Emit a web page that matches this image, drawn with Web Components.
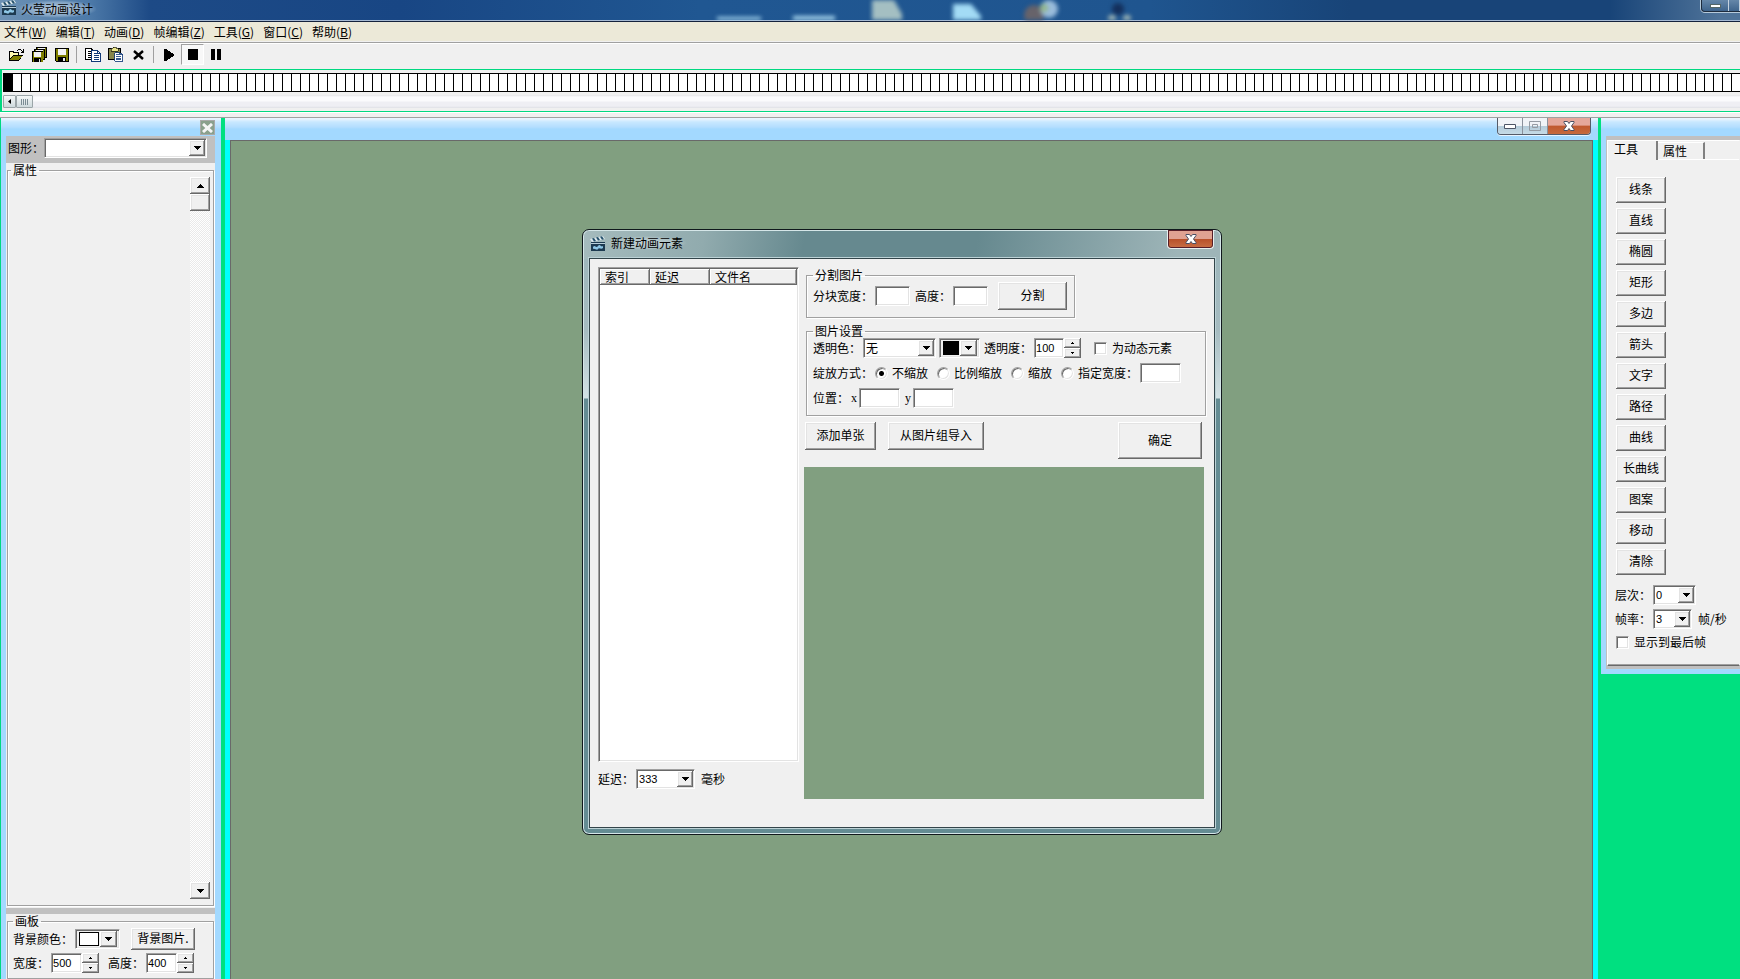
<!DOCTYPE html>
<html lang="zh-CN">
<head>
<meta charset="utf-8">
<title>火莹动画设计</title>
<style>
html,body{margin:0;height:100%}
body{font:12px/14px "Noto Sans CJK SC","Liberation Sans",sans-serif;color:#000;overflow:hidden;background:#f0f0f0}
</style>
</head>
<body>
<fx-app></fx-app>
<script>
const BASE = `
*{box-sizing:border-box}
:host{display:block;box-sizing:border-box}
button,input,select{font:inherit;color:#000;margin:0;padding:0;border:0;border-radius:0;outline:0;background:none;appearance:none}
label,span{white-space:nowrap}
.raised{background:#f0f0f0;box-shadow:inset -1px -1px #696969,inset 1px 1px #fff,inset -2px -2px #a0a0a0,inset 2px 2px #e3e3e3}
.sunken{background:#fff;border:1px solid;border-color:#a0a0a0 #fff #fff #a0a0a0;box-shadow:inset 1px 1px #696969,inset -1px -1px #e3e3e3}
svg{display:block}
`;
const ARROW = '<svg width="7" height="4" shape-rendering="crispEdges"><path d="M0 0h7v1h-1v1h-1v1h-1v1h-1v-1h-1v-1h-1v-1h-1z"/></svg>';
const CLAP = `<svg width="16" height="16" viewBox="0 0 16 16"><path d="M1 6h14v9H1z" fill="#1d3a50"/><path d="M0 3 13 0l2 3L2 6z" fill="#dde8ec"/><path d="m2 2.500 2 3 2-.5-2-3zM6 1.500l2 3 2-.5-2-3zM10 .8l2 3 2-.5-2-3z" fill="#24506b"/><path d="M1 7h14v1H1z" fill="#b9cfda"/><path d="M3 11c2-3 3 2 5-1s3 2 5 0v2c-2 2-4-1-5 1s-3-1-5 0z" fill="#8ec7e6"/></svg>`;
const GLYPH_X = '<svg width="12" height="10" viewBox="0 0 12 10"><path d="M1 .5h3.500L6 2.500 7.500.5H11v1L8.500 5 11 8.500v1H7.500L6 7.500l-1.500 2H1v-1L3.500 5 1 1.500z" fill="#fff" stroke="#4a4f63"/></svg>';

function define(name, css, html){
  customElements.define(name, class extends HTMLElement{
    constructor(){
      super();
      this.attachShadow({mode:'open'});
    }
    connectedCallback(){
      const attr = (key, fallback = '') => this.getAttribute(key) ?? fallback;
      this.shadowRoot.innerHTML = '<style>' + BASE + css + '</style>' + (typeof html === 'function' ? html(attr) : html);
    }
  });
}

/* ---- basic controls ---- */
define('fx-button', `
:host{display:inline-block;width:50px;height:26px;flex:none}
button{width:100%;height:100%;padding-bottom:2px;white-space:nowrap}`,
'<button type="button" class="raised"><slot></slot></button>');

define('fx-combo', `
:host{display:flex;align-items:center;gap:2px;--w:60px}
.box{display:grid;width:var(--w);height:20px;padding:1px}
select{grid-area:1/1;width:100%;height:16px;padding-left:1px;font:var(--combo-font,11px/14px "Liberation Sans",sans-serif)}
.arrow{grid-area:1/1;justify-self:end;width:16px;height:16px;display:grid;place-items:center;pointer-events:none}
.suffix{margin-left:4px}`,
a => `<label for="c">${a('label')}</label><div class="box sunken"><select id="c" aria-label="${a('label')}"><option>${a('value')}</option></select><div class="arrow raised">${ARROW}</div></div>${a('suffix') ? `<span class="suffix">${a('suffix')}</span>` : ''}`);

define('fx-color', `
:host{display:flex;align-items:center;gap:2px}
button{display:flex;align-items:center;height:20px;padding:2px;background:#f0f0f0}
.chip{width:20px;height:14px;border:1px solid #000;margin:0 1px}
.arrow{width:17px;height:16px;display:grid;place-items:center}`,
a => `<label for="c">${a('label')}</label><button id="c" type="button" class="sunken" style="background:#f0f0f0" aria-label="${a('name')}"><div class="chip" style="background:${a('value')};width:${a('chip','20')}px"></div><div class="arrow raised">${ARROW}</div></button>`);

define('fx-field', `
:host{display:flex;align-items:center;gap:2px;--w:35px}
input{width:var(--w);height:20px;padding:0 3px}
.latin{font-family:"Liberation Serif",serif}`,
a => `<label for="t" ${a('latin') ? 'class="latin"' : ''}>${a('label')}</label><input id="t" type="text" class="sunken" aria-label="${a('label')}">`);

define('fx-spin', `
:host{display:flex;align-items:center;gap:2px;--w:31px}
input{width:var(--w);height:20px;padding:0 0 0 1px;font:11px/14px "Liberation Sans",sans-serif}
.wrap{display:flex}
.ud{display:grid;grid-template-rows:10px 10px;width:17px}
.ud button{display:grid;place-items:center}
.ud svg{shape-rendering:crispEdges}`,
a => `<label for="n">${a('label')}</label><div class="wrap"><input id="n" type="text" inputmode="numeric" class="sunken" value="${a('value')}"><div class="ud"><button type="button" class="raised" aria-label="增加"><svg width="3" height="2"><path d="M1 0h1v1h1v1H0V1h1z"/></svg></button><button type="button" class="raised" aria-label="减少"><svg width="3" height="2"><path d="M0 0h3v1H2v1H1V1H0z"/></svg></button></div></div>`);

define('fx-check', `
:host{display:flex;align-items:center;gap:5px}
input{width:13px;height:13px;flex:none}`,
a => `<input id="k" type="checkbox" class="sunken"><label for="k">${a('label')}</label>`);

define('fx-radios', `
:host{display:flex;align-items:center}
.opt{display:flex;align-items:center;gap:4px;margin-right:9px}
.opt:last-of-type{margin-right:0}
.title{margin-right:2px}
input{width:13px;height:13px;border-radius:50%;background:#fff;border:1px solid;border-color:#a0a0a0 #fff #fff #a0a0a0;box-shadow:inset 1px 1px #696969,inset -1px -1px #e3e3e3}
input:checked{background:radial-gradient(circle,#000 2px,#fff 3px)}`,
a => `<span class="title">${a('label')}</span>` + a('options').split(',').map((o,i) =>
`<div class="opt"><input type="radio" name="m" id="r${i}" ${i ? '' : 'checked'}><label for="r${i}">${o}</label></div>`).join(''));

define('fx-group', `
fieldset{margin:0;min-width:0;height:100%;border:1px solid #a0a0a0;box-shadow:1px 1px #fff,inset 1px 1px #fff;padding:var(--pad,0 6px 7px)}
legend{padding:0 2px}`,
a => `<fieldset><legend>${a('label')}</legend><slot></slot></fieldset>`);

/* ---- main window chrome ---- */
define('fx-titlebar', `
:host{height:22px;overflow:hidden;border-bottom:1px solid #14223c;background:linear-gradient(90deg,#6d92b5,#4c79a8 90px,#1d4a86 150px,#184684 400px,#205792 700px,#1f558f 1150px,#184478 1350px,#184478 1610px,#4f7399 1720px)}
.in{display:flex;align-items:flex-start;height:21px;border-bottom:1px solid #a5b9d3;padding-left:1px}
h1{font:inherit;line-height:18px;margin:0 auto 0 0;padding:0 4px;background:radial-gradient(closest-side,#bdd0e3,#a0bad499 75%,transparent)}
svg{flex:none}
.blobs{filter:blur(2px)}
.cap{display:flex;margin-left:382px;width:39px;height:12px;border:1px solid #1d2b3d;border-width:0 0 1px 1px;border-radius:0 0 0 4px;box-shadow:0 1px #b6cadb,-1px 0 #b6cadb;background:linear-gradient(#6587a9,#3f648c)}
.cap button{width:27px;height:11px;border-right:1px solid #c5d3e0;display:grid;place-items:center}
.cap i{width:11px;height:4px;background:#fff;border:1px solid #566}
.cap button+button{width:11px}`,
`<div class="in">${CLAP}<h1>火莹动画设计</h1>
<svg class="blobs" width="620" height="20" viewBox="700 0 620 20"><path d="M718 17h44v6h-44zM794 16h42v6h-42z" fill="#a9d8ef"/><path d="M873 0h22l8 14v8h-30z" fill="#a4bfc2"/><path d="M954 4h18l10 12v6h-28z" fill="#a3dbf5"/><circle cx="1035" cy="15" r="10" fill="#67636a"/><circle cx="1050" cy="9" r="9" fill="#9abcdb"/><circle cx="1045" cy="8" r="4" fill="#94b88e"/><circle cx="1119" cy="9" r="6" fill="#14305c"/><circle cx="1113" cy="19" r="4" fill="#a9bcb6"/><circle cx="1128" cy="19" r="4" fill="#a9bcb6"/></svg>
<div class="cap"><button type="button" aria-label="最小化"><i></i></button><button type="button" aria-label="最大化"></button></div></div>`);

define('fx-menubar', `
:host{height:22px;background:linear-gradient(#ece9d8 19px,#f0f0f0 19px 20px,#a0a0a0 20px 21px,#fff 21px)}
nav{display:flex;gap:9px;padding:3px 4px}
a{color:#000;text-decoration:none;white-space:nowrap}`,
'<nav>' + ['文件W','编辑T','动画D','帧编辑Z','工具G','窗口C','帮助B'].map(m => `<a href="#">${m.slice(0,-1)}(<u>${m.slice(-1)}</u>)</a>`).join('') + '</nav>');

const FLOPPY = '<path d="M0 0h14v14H1l-1-1z"/><path d="M1 1h2v6h8V1h2v12h-2V9H3v4H1z" fill="#808000"/><path d="M3 1h8v6H3z" fill="#f4f4f4"/><path d="M8 10h2v3H8z" fill="#e8e8e8"/>';
const PAGE = '<path d="M0 0h6l3 3v8H0z" fill="#fff" stroke="currentColor"/><path d="M6 0v3h3" fill="none" stroke="currentColor"/><path d="M2 3h3M2 5h5M2 7h5M2 9h5" stroke="currentColor" stroke-width="1"/>';
define('fx-toolbar', `
:host{height:25px;background:#f0f0f0}
div{display:flex;padding-left:4px}
button{width:23px;height:21px;display:grid;place-items:center}
.on{background:#f8f8f8;border:1px solid;border-color:#a0a0a0 #fff #fff #a0a0a0}
hr{width:1px;height:17px;border:0;background:#a0a0a0;margin:2px 4px 2px 3px}
svg{shape-rendering:crispEdges}`,
`<div>
<button type="button" aria-label="打开"><svg width="16" height="14"><path d="M1 3h4l1 1h5v3h4l-4 6H1z" fill="#000"/><path d="M2 4h2l1 1h5v2H5l-3 4z" fill="#fffbb0"/><path d="M5 8h9l-3 4H2z" fill="#808000"/><path d="M9 2h1V1h3v1h1v1h1V1h1v4h-3V4h1V3h-1V2h-3v1H9z"/></svg></button>
<button type="button" aria-label="全部保存"><svg width="16" height="16"><g transform="translate(5 0) scale(.78)">${FLOPPY}</g><g transform="translate(3 2) scale(.78)">${FLOPPY}</g><g transform="translate(1 4) scale(.82)">${FLOPPY}</g></svg></button>
<button type="button" aria-label="保存"><svg width="14" height="14">${FLOPPY}</svg></button>
<hr>
<button type="button" aria-label="复制"><svg width="16" height="14"><g transform="translate(.5 .5)" color="#000">${PAGE}</g><g transform="translate(6.500 2.500)" color="#123a78">${PAGE}</g></svg></button>
<button type="button" aria-label="粘贴"><svg width="16" height="15"><path d="M0 1h13v12H0z"/><path d="M1 2h11v10H1z" fill="#85854a"/><path d="M3 1h2V0h3v1h2v3H3z" fill="#e9e58a" stroke="#000" stroke-width=".6"/><g transform="translate(6.500 5.500) scale(.9 .8)" color="#123a78">${PAGE}</g></svg></button>
<button type="button" aria-label="删除"><svg width="11" height="10" style="shape-rendering:auto"><path d="m1 1 9 8M10 1 1 9" stroke="#000" stroke-width="2.400"/></svg></button>
<hr>
<button type="button" aria-label="播放"><svg width="11" height="12"><path d="M0 0h2l9 6-9 6H0z"/></svg></button>
<button type="button" class="on" aria-label="停止"><svg width="10" height="11"><path d="M0 0h10v11H0z"/></svg></button>
<button type="button" aria-label="暂停"><svg width="10" height="11"><path d="M0 0h4v11H0zM6 0h4v11H6z"/></svg></button>
</div>`);

define('fx-timeline', `
:host{height:49px;border-bottom:1px solid #a0a0a0;background:#f0f0f0}
.frame{height:43px;border:1px solid #00d880;border-width:1px 0 1px 2px;padding:3px 0 3px 1px;box-shadow:0 1px #fff}
.strip{height:19px;border:1px solid #000;border-width:1px 0;background:linear-gradient(#000,#000) 0 0/10px 100% no-repeat,repeating-linear-gradient(90deg,#000 0 1px,#fff 1px 9px)}
.scroll{display:flex;margin-top:3px;height:13px;background:linear-gradient(#e5e5e8,#fbfbfd 2px 6px,#efeff4 7px 11px,#dfe0e6)}
button{height:13px;border:1px solid #9ba5a8;border-radius:1px;background:linear-gradient(#f5f8f8,#ced9dc);display:grid;place-items:center}
.l{width:13px}.t{width:17px}`,
`<div class="frame"><div class="strip"></div><div class="scroll"><button type="button" class="l" aria-label="向左"><svg width="3" height="5"><path d="M3 0v5L0 2.500z"/></svg></button><button type="button" class="t" aria-label="滚动块"><svg width="8" height="6" shape-rendering="crispEdges"><path d="M0 0h1v6H0zM2 0h1v6H2zM4 0h1v6H4zM6 0h1v6H6z" fill="#7b8c94"/></svg></button></div></div>`);

/* ---- docked panels ---- */
define('fx-left', `
:host{display:flex;flex-direction:column;width:221px;flex:none;padding:0 6px 0 5px;background:linear-gradient(#e8f4ff 1px,#c8e8ff 4px,#b4deff 9px,#a3d9ff 11px);border-left:1px solid #00d880}
header{height:18px;display:flex;justify-content:flex-end;padding-top:2px}
header button{width:15px;height:15px;background:#8aa08c;border:1px solid #a9a9a9;display:grid;place-items:center}
.pick{height:27px;background:#c0c0c0;padding:2px 0 0 2px}
.pick fx-combo{--w:163px;gap:0}
.props{flex:1;min-height:0;background:#f0f0f0;padding:0 1px 2px 1px;--pad:0 3px 6px}
.props fx-group{height:100%}
.bar{display:flex;flex-direction:column;margin-left:auto;width:20px;height:100%;background:repeating-conic-gradient(#fff 0 25%,#eaeaea 0 50%) 0 0/2px 2px}
.bar button{height:17px;display:grid;place-items:center}
.bar button:last-child{margin-top:auto}
.bar svg{shape-rendering:crispEdges}
.gap{height:6px;background:#c0c0c0}
.board{background:#f0f0f0;padding:0 1px 0 1px;--pad:0 5px 5px}
.row{display:flex;align-items:center;height:21px}
.row+.row{margin-top:3px}
.row fx-button{width:64px;height:22px;margin-left:11px}
.row fx-spin+fx-spin{margin-left:9px}`,
`<header><button type="button" aria-label="关闭"><svg width="11" height="10"><path d="m1 1 9 8M10 1 1 9" stroke="#f5f5f5" stroke-width="3"/></svg></button></header>
<div class="pick"><fx-combo label="图形：" value=""></fx-combo></div>
<div class="props"><fx-group label="属性"><div class="bar"><button type="button" class="raised" aria-label="向上"><svg width="7" height="4"><path d="M3 0h1v1h1v1h1v1h1v1H0V3h1V2h1V1h1z"/></svg></button><button type="button" class="raised" aria-label="滚动块"></button><button type="button" class="raised" aria-label="向下">${ARROW}</button></div></fx-group></div>
<div class="gap"></div>
<div class="board"><fx-group label="画板"><div class="row"><fx-color label="背景颜色：" name="背景颜色" value="#fff"></fx-color><fx-button>背景图片.</fx-button></div><div class="row"><fx-spin label="宽度：" value="500"></fx-spin><fx-spin label="高度：" value="400"></fx-spin></div></fx-group></div>`);

define('fx-stage', `
:host{flex:1;min-width:0;display:flex;flex-direction:column;background:#0ff}
header{height:22px;flex:none;display:flex;justify-content:flex-end;padding-right:7px;background:linear-gradient(#e8f4ff 1px,#c8e8ff 4px,#b4deff 9px,#a3d9ff 11px)}
header div{display:flex;height:17px;border:1px solid #555b68;border-top:0;border-radius:0 0 4px 4px;overflow:hidden;box-shadow:0 1px #e8f4ff}
header button{width:25px;height:16px;display:grid;place-items:center;background:linear-gradient(#f0f3f7 50%,#b4cbd9 50%,#c6dbe6);border-right:1px solid #8a919c}
header button:last-child{width:42px;border:0;background:linear-gradient(#e5a79b 45%,#c0582f 50%,#c66a3d)}
.art{flex:1;margin:0 5px;background:#819f80;border:1px solid #696969;border-bottom:0}`,
`<header><div><button type="button" aria-label="最小化"><svg width="12" height="5"><path d="M.5.5h11v4H.5z" fill="#fff" stroke="#4c5566"/></svg></button><button type="button" aria-label="还原"><svg width="12" height="10"><path d="M.5.5h11v9H.5zM3.500 3.500h5v3h-5z" fill="none" stroke="#959ba3"/></svg></button><button type="button" aria-label="关闭">${GLYPH_X}</button></div></header><div class="art"></div>`);

define('fx-tools', `
:host{width:139px;flex:none;align-self:flex-start;overflow:hidden;padding:18px 0 5px 5px;background:linear-gradient(#e8f4ff 1px,#c8e8ff 4px,#b4deff 9px,#a3d9ff 11px)}
.edge{background:#c0c0c0;padding:4px 0 3px 1px}
.page{background:#f0f0f0;border:1px solid;border-color:#fff #f0f0f0 #696969 #fff;box-shadow:inset 0 -1px #a0a0a0;padding-bottom:14px}
.tabs{display:flex;height:20px}
.tabs button{height:19px;text-align:left}
.tabs .a{width:50px;padding:0 0 4px 6px;border-right:2px solid #808080}
.tabs .b{width:47px;padding-left:5px;border-top:1px solid #fff;border-right:2px solid #808080;margin-top:1px;height:17px}
.tabs .rest{flex:1;border-bottom:1px solid #fff;display:flex;margin-bottom:1px}
.list{display:grid;gap:5px;justify-content:start;padding:16px 0 0 8px}
.opts{display:grid;gap:4px;padding:10px 0 0 7px}
.opts fx-check{height:18px;padding-left:1px}
.layer{--w:43px}.rate{--w:39px}`,
`<div class="edge"><div class="page"><div class="tabs"><button type="button" class="a">工具</button><div class="rest"><button type="button" class="b">属性</button></div></div>
<div class="list">${'线条,直线,椭圆,矩形,多边,箭头,文字,路径,曲线,长曲线,图案,移动,清除'.split(',').map(t => `<fx-button>${t}</fx-button>`).join('')}</div>
<div class="opts"><fx-combo class="layer" label="层次：" value="0"></fx-combo><fx-combo class="rate" label="帧率：" value="3" suffix="帧/秒"></fx-combo><fx-check label="显示到最后帧"></fx-check></div></div></div>`);

/* ---- floating dialog ---- */
define('fx-dialog', `
:host{border:1px solid #10181c;border-radius:7px;box-shadow:inset 0 0 0 1px #d5e6e8;padding:0 6px 6px;
background:linear-gradient(100deg,#a5bbbd,#91abae 120px,#66898f 220px,#66898f 390px,#9eb5b8 590px) 0 0/100% 29px no-repeat,linear-gradient(#9bb5ba,#a5bbc0 100px,#d2e1e4 168px,#648c93 169px)}
header{height:28px;display:flex;align-items:flex-start;padding:6px 0 0 1px}
h2{font:inherit;margin:0 auto 0 1px;padding:0 4px;background:radial-gradient(closest-side,#c6d5d8,#b7c9cc99 75%,transparent)}
header button{margin:-6px 1px 0 0;width:47px;height:19px;border:1px solid #e8f0f0;border-top:0;border-radius:0 0 4px 4px;box-shadow:inset 0 0 0 1px #561e28;background:linear-gradient(#e0a292 48%,#b8502a 50%,#c86f45);display:grid;place-items:center}
.body{background:#f0f0f0;border:1px solid #33454a;box-shadow:0 0 0 1px #bcd2d6;padding:8px 7px 28px 8px;display:flex;gap:5px}`,
a => `<header>${CLAP}<h2>${a('label')}</h2><button type="button" aria-label="关闭">${GLYPH_X}</button></header><div class="body"><slot></slot></div>`);

define('fx-list', `
:host{width:201px;height:495px;flex:none}
div{height:100%;padding:1px 1px 0 1px}
table{border-collapse:collapse;table-layout:fixed;width:100%}
th{font-weight:400;text-align:left;height:16px;padding:0 0 0 5px;line-height:14px;background:#f0f0f0;box-shadow:inset -1px -1px #696969,inset 1px 1px #fff,inset -2px -2px #a0a0a0}`,
'<div class="sunken"><table><colgroup><col style="width:50px"><col style="width:60px"><col></colgroup><thead><tr><th>索引</th><th>延迟</th><th>文件名</th></tr></thead></table></div>');

define('fx-new-element', `
:host{display:contents}
.left{display:grid;gap:7px;align-content:start}
.left fx-combo{--w:59px}
.right{padding-top:1px}
.split{width:269px;height:50px;margin:0 0 6px 2px;--pad:0 5px 7px 6px}
.set{width:400px;margin:0 0 6px 2px;--pad:0 5px 7px 6px}
.row{display:flex;align-items:center;height:20px}
.row+.row{margin-top:5px}
.split .row{height:28px;gap:5px}
.split fx-button{width:69px;height:28px;margin-left:5px}
.trans{--w:73px;--combo-font:12px/14px "Noto Sans CJK SC",sans-serif;margin-right:1px}
.row fx-spin{margin:0 13px 0 4px;--w:30px}
.w41{--w:41px}
.pos{margin-right:2px}
.y{margin-left:5px}
.acts{display:flex;align-items:flex-start;width:400px;padding-left:1px;margin-bottom:8px}
.acts fx-button{height:28px;width:71px;margin-right:12px}
.acts .imp{width:96px}
.acts .ok{width:84px;height:37px;margin:0 2px 0 auto}
.preview{width:400px;height:332px;background:#819f80}`,
`<div class="left"><fx-list></fx-list><fx-combo label="延迟：" value="333" suffix="毫秒"></fx-combo></div>
<div class="right">
<fx-group class="split" label="分割图片"><div class="row"><fx-field label="分块宽度："></fx-field><fx-field label="高度："></fx-field><fx-button>分割</fx-button></div></fx-group>
<fx-group class="set" label="图片设置">
<div class="row"><fx-combo class="trans" label="透明色：" value="无"></fx-combo><fx-color name="透明色" chip="16" value="#000"></fx-color><fx-spin label="透明度：" value="100"></fx-spin><fx-check label="为动态元素"></fx-check></div>
<div class="row"><fx-radios label="绽放方式：" options="不缩放,比例缩放,缩放,指定宽度："></fx-radios><fx-field class="w41" label=""></fx-field></div>
<div class="row"><span class="pos">位置：</span><fx-field class="w41" latin="1" label="x"></fx-field><fx-field class="w41 y" latin="1" label="y"></fx-field></div>
</fx-group>
<div class="acts"><fx-button>添加单张</fx-button><fx-button class="imp">从图片组导入</fx-button><fx-button class="ok">确定</fx-button></div>
<div class="preview"></div>
</div>`);

define('fx-app', `
:host{display:flex;flex-direction:column;height:100vh;overflow:hidden}
.mdi{flex:1;min-height:0;position:relative;display:flex;background:#00e080}
fx-stage{margin:0 3px 0 4px}
fx-dialog{position:absolute;left:582px;top:111px;width:640px}`,
`<fx-titlebar></fx-titlebar><fx-menubar></fx-menubar><fx-toolbar></fx-toolbar><fx-timeline></fx-timeline>
<div class="mdi"><fx-left></fx-left><fx-stage></fx-stage><fx-tools></fx-tools>
<fx-dialog label="新建动画元素"><fx-new-element></fx-new-element></fx-dialog></div>`);
</script>
</body>
</html>
